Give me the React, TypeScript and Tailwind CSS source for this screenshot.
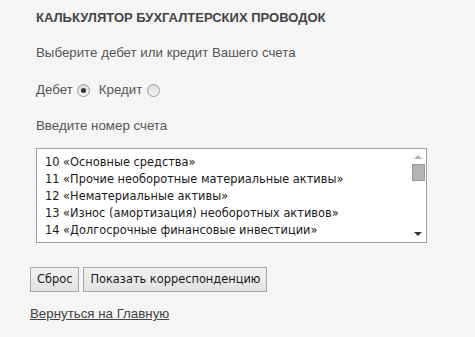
import React, { useState } from 'react';

// only the rows that fit in the list box
const accounts = [
  '10 «Основные средства»',
  '11 «Прочие необоротные материальные активы»',
  '12 «Нематериальные активы»',
  '13 «Износ (амортизация) необоротных активов»',
  '14 «Долгосрочные финансовые инвестиции»',
];

function Radio({ checked, onClick }: { checked: boolean; onClick: () => void }) {
  return (
    <span
      onClick={onClick}
      className="inline-flex items-center justify-center w-[13px] h-[13px] rounded-full border border-[#9a9a9a] bg-gradient-to-b from-[#dcdcdc] to-[#f4f4f4] cursor-pointer"
    >
      {checked && <span className="block w-[5px] h-[5px] rounded-full bg-[#333]" />}
    </span>
  );
}

export default function App() {
  const [side, setSide] = useState<'debit' | 'credit'>('debit');

  return (
    <div className="w-[475px] h-[337px] bg-[#f5f5f5] text-[#555] font-['Liberation_Sans',Arial,sans-serif] text-[13.3px] overflow-hidden">
      <div className="pl-[36px] pt-[10px]">
        <h1 className="text-[13px] font-bold leading-[16px] text-[#444] uppercase">
          Калькулятор бухгалтерских проводок
        </h1>
        <p className="mt-[19px] leading-[16px]">Выберите дебет или кредит Вашего счета</p>
        <div className="mt-[21px] flex items-center h-[16px] leading-[16px]">
          <span>Дебет</span>
          <span className="ml-[4px] flex">
            <Radio checked={side === 'debit'} onClick={() => setSide('debit')} />
          </span>
          <span className="ml-[9px]">Кредит</span>
          <span className="ml-[5px] flex">
            <Radio checked={side === 'credit'} onClick={() => setSide('credit')} />
          </span>
        </div>
        <p className="mt-[20px] leading-[16px]">Введите номер счета</p>

        <div className="mt-[14px] w-[391px] h-[95px] border border-[#a0a0a0] bg-white flex">
          <div className="flex-1 pl-[8px] pt-[5px] font-['DejaVu_Sans',Tahoma,sans-serif] text-[11.4px] text-[#1a1a1a] leading-[17px]">
            {accounts.map((a) => (
              <div key={a} className="whitespace-nowrap">{a}</div>
            ))}
          </div>
          <div className="w-[16px] flex flex-col items-center py-[2px]">
            <div className="w-0 h-0 border-l-[4px] border-r-[4px] border-b-[4px] border-l-transparent border-r-transparent border-b-[#b0b0b0] mt-[4px]" />
            <div className="mt-[5px] w-[13px] h-[17px] bg-[#b4b4b4] border border-[#999]" />
            <div className="flex-1" />
            <div className="w-0 h-0 border-l-[4px] border-r-[4px] border-t-[4px] border-l-transparent border-r-transparent border-t-[#333] mb-[4px]" />
          </div>
        </div>
      </div>

      <div className="pl-[30px] mt-[24px] flex gap-[4px] font-['DejaVu_Sans',Tahoma,sans-serif] text-[11.4px] text-[#1a1a1a]">
        <button className="h-[25px] px-[6px] border border-[#a8a8a8] bg-gradient-to-b from-[#f2f2f2] to-[#e2e2e2]">
          Сброс
        </button>
        <button className="h-[25px] px-[6px] border border-[#a8a8a8] bg-gradient-to-b from-[#f2f2f2] to-[#e2e2e2]">
          Показать корреспонденцию
        </button>
      </div>

      <div className="pl-[30px] mt-[14px] leading-[16px]">
        <a href="#" className="underline text-[#444]">Вернуться на Главную</a>
      </div>
    </div>
  );
}
